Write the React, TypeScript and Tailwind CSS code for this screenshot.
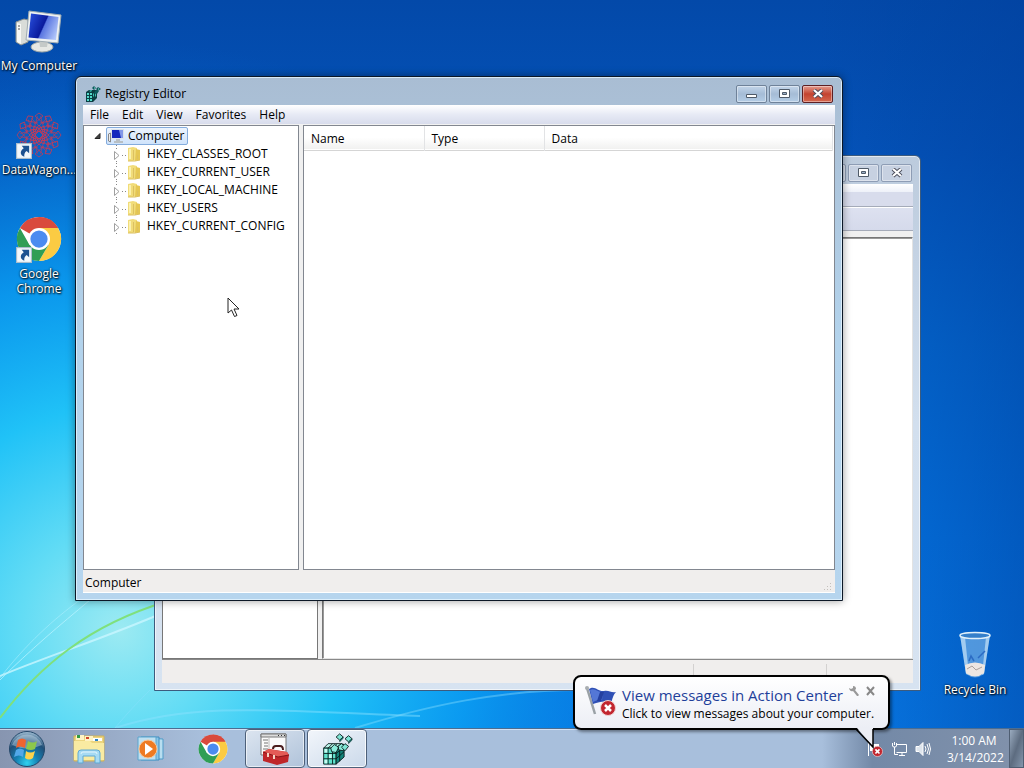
import { useState } from "react";
import type { ReactNode } from "react";

const keys = [
  "HKEY_CLASSES_ROOT",
  "HKEY_CURRENT_USER",
  "HKEY_LOCAL_MACHINE",
  "HKEY_USERS",
  "HKEY_CURRENT_CONFIG",
];

const Wallpaper = () => (
  <svg
    className="absolute inset-0 w-full h-full"
    viewBox="0 0 1024 768"
    preserveAspectRatio="none"
    aria-hidden="true"
  >
    <defs>
      <linearGradient id="sky" x1="0" y1="0" x2="0" y2="1">
        <stop offset="0" stopColor="#0349a9" />
        <stop offset="0.2" stopColor="#0453b9" />
        <stop offset="0.45" stopColor="#0468d0" />
        <stop offset="0.7" stopColor="#0474e2" />
        <stop offset="1" stopColor="#087be8" />
      </linearGradient>
      <radialGradient
        id="glow"
        gradientUnits="userSpaceOnUse"
        cx="120"
        cy="630"
        r="590"
      >
        <stop offset="0" stopColor="#9ceaf2" />
        <stop offset="0.17" stopColor="#62dcf5" />
        <stop offset="0.38" stopColor="#20c2f7" />
        <stop offset="0.6" stopColor="#0b9ff2" stopOpacity="0.85" />
        <stop offset="1" stopColor="#0468d0" stopOpacity="0" />
      </radialGradient>
      <linearGradient id="shade" x1="0" y1="0" x2="1" y2="0">
        <stop offset="0.8" stopColor="#003f9c" stopOpacity="0" />
        <stop offset="1" stopColor="#003f9c" stopOpacity="0.5" />
      </linearGradient>
    </defs>
    <rect width="1024" height="768" fill="url(#sky)" />
    <rect width="1024" height="768" fill="url(#glow)" />
    <rect width="1024" height="768" fill="url(#shade)" />
    <g fill="none">
      <path d="M0 676C50 655 100 640 165 612" stroke="#c9f6ff" strokeWidth="2" opacity="0.8" />
      <path d="M0 680C30 650 60 625 90 600" stroke="#b5f2ff" strokeWidth="1" opacity="0.8" />
      <path d="M0 678C25 645 55 618 80 600" stroke="#b5f2ff" strokeWidth="1" opacity="0.5" />
      <path d="M0 718C40 665 90 625 165 602" stroke="#7fe07c" strokeWidth="2" />
      <path d="M115 728C200 700 290 712 420 716" stroke="#8fe2ff" strokeWidth="2" opacity="0.45" />
      <path d="M115 728C130 710 140 700 150 690" stroke="#8fe2ff" strokeWidth="1" opacity="0.4" />
      <path d="M355 728C430 705 500 690 580 690" stroke="#8fe2ff" strokeWidth="2" opacity="0.4" />
    </g>
  </svg>
);

const Shortcut = () => (
  <svg viewBox="0 0 14 14" className="absolute left-0 bottom-0 w-4 h-4" aria-hidden="true">
    <rect x="0.5" y="0.5" width="13" height="13" fill="#f2f7fb" stroke="#a9bccb" />
    <path d="M5 2.5h6.5V9L9.3 6.9C7.6 8 7 9.700 7.300 12C3.300 10.500 3.200 7 6.800 4.500z" fill="#1c5190" />
  </svg>
);

const ChromeIcon = ({ className }: { className: string }) => (
  <svg viewBox="0 0 48 48" className={className} aria-hidden="true">
    <circle cx="24" cy="24" r="23" fill="#fff" />
    <path d="M24 24L4.080 12.500A23 23 0 0 1 43.920 12.500z" fill="#d94a3d" />
    <path d="M24 1A23 23 0 0 1 43.920 12.500H24z" fill="#d94a3d" />
    <path d="M43.920 12.500A23 23 0 0 1 24 47L34 30L24 12.500z" fill="#fbcb43" />
    <path d="M4.080 12.500A23 23 0 0 0 24 47L34 30H14z" fill="#2f9e55" />
    <circle cx="24" cy="24" r="11.500" fill="#fff" />
    <circle cx="24" cy="24" r="9" fill="#4b8bf0" />
  </svg>
);

const MonitorIcon = () => (
  <svg viewBox="0 0 48 44" className="w-12 h-11" aria-hidden="true">
    <defs>
      <linearGradient id="screen" x1="0" y1="0.300" x2="1" y2="0.700">
        <stop offset="0" stopColor="#2448d4" />
        <stop offset="0.48" stopColor="#0a1a9c" />
        <stop offset="0.52" stopColor="#5a76e0" />
        <stop offset="1" stopColor="#b4c8fb" />
      </linearGradient>
    </defs>
    <path d="M1 13l8-3 4 1v22l-7 3-5-3z" fill="#d9dcd8" stroke="#8b9291" />
    <path d="M2 14l4 1v20l-4-2z" fill="#f7f8f5" />
    <path d="M3 17h2M3 20h2" stroke="#555" />
    <ellipse cx="27" cy="38" rx="11" ry="5" fill="#e6e8e4" stroke="#a2a9a7" />
    <path d="M24 30l9 1-1 7h-7z" fill="#c5cac8" />
    <path d="M14 2L46 6L43 34L11 31z" fill="#eef1f2" stroke="#9facb3" />
    <path d="M16 4.500L43.500 8L41 31L13.500 28.500z" fill="url(#screen)" />
  </svg>
);

const StarIcon = () => (
  <svg viewBox="0 0 46 46" className="w-[46px] h-[46px]" fill="none" stroke="#c23a58" aria-hidden="true">
    {[0, 30, 60, 90, 120, 150, 180, 210, 240, 270, 300, 330].map((deg) => (
      <g key={deg} transform={`rotate(${deg} 23 23)`}>
        <path d="M19 4l4-3 4 3-9 8M28 12l-9-8" strokeWidth="0.8" />
        <path d="M15 6l8 8 8-8" strokeWidth="0.6" />
        <path d="M20 17l3-4 3 4-3 3z" strokeWidth="1" />
      </g>
    ))}
  </svg>
);

const RecycleIcon = () => (
  <svg viewBox="0 0 40 48" className="w-10 h-12" aria-hidden="true">
    <path d="M5 4L11 43Q20 50 29 43L35 4z" fill="#9cccf2" fillOpacity="0.5" />
    <path d="M5 4L11 43L14 44L10 6zM35 4L29 43L27 44L31 6z" fill="#d8eefb" fillOpacity="0.6" />
    <path d="M10 34Q20 29 30 34L29 42Q20 49 11 42z" fill="#ece6e2" />
    <path d="M12 38l5-3 4 4 6-3" fill="none" stroke="#aaa09c" />
    <path d="M14 30l2-5 3 5M23 27l7-7" stroke="#2c6cc4" strokeWidth="1.500" fill="none" />
    <ellipse cx="20" cy="4.500" rx="15" ry="3" fill="#347fca" stroke="#e0f0fa" strokeWidth="1.500" />
  </svg>
);

const RegeditIcon = ({ className }: { className: string }) => (
  <svg viewBox="0 0 36 36" className={className} stroke="#07191a" strokeWidth="1" aria-hidden="true">
    <path d="M3 17l5-5h15l-5 5z" fill="#b8f4e9" />
    <path d="M3 17h14v18H3z" fill="#5fe3cd" />
    <path d="M17 17l6-5 3 1v14l-9 8z" fill="#128379" />
    <path d="M3 23h14M3 29h14M8 17v18M13 17v18M17 23l9-7M17 29l9-8M21 14v18M8 17l5-5M13 17l5-5" fill="none" />
    <path d="M4 18h3v4H4zM9 24h3v4H9zM4 30h3v4H4zM14 18h2v4h-2z" fill="#c9f8f0" stroke="none" />
    <path d="M11 17l4-4 5 3-3 6-5-1zM19 15l4-3 4 3-2 5-5-1z" fill="#8cecdc" />
    <path d="M21 1l4 3.500-4 3.500-4-3.500zM31 3l4 3.500-4 3.500-4-3.500zM27 12l4 3-4 5-4-4z" fill="#7fe5d4" />
    <path d="M21 8v2l4-4V4.500zM31 10v2l4-4V6.500z" fill="#128379" strokeWidth="0.5" />
  </svg>
);

// Title bar size, with fewer and heavier cells so that it stays readable at 16px.
const RegeditSmall = () => (
  <svg viewBox="0 0 16 16" className="w-4 h-4" aria-hidden="true">
    <path d="M1 6l3-2h8v8l-4 4H1z" fill="#0b3f43" />
    <path d="M2 7h2v2H2zM5 7h2v2H5zM2 10h2v2H2zM5 10h2v2H5zM2 13h2v2H2zM5 13h2v2H5z" fill="#53dbcb" />
    <path d="M4 5l2-1h1L6 6zM8 8l1-1v3l-1 1zM10 8l1-1v3l-1 1z" fill="#3dbfb3" />
    <path d="M9 0l2 2-2 2-2-2zM13 1l3 2-3 2-2-2zM11 4l3 1-2 3-3-1z" fill="#0e5a5c" />
    <path d="M9 1l1 1-1 1zM13 2l1 1-1 1z" fill="#7fe5d4" />
  </svg>
);

const SmallComputer = () => (
  <svg viewBox="0 0 18 16" className="w-[18px] h-4" aria-hidden="true">
    <path d="M1.500 6l2-1v9l-2-1z" fill="#eee" stroke="#888" />
    <path d="M4 1h13v10H4z" fill="#dbe2ea" />
    <path d="M5 2h11v8H5z" fill="#1327bd" />
    <path d="M12 2h4v8h-2z" fill="#8298e8" />
    <path d="M9 11h4v2h3v2H7v-2h2z" fill="#b8bfc4" />
  </svg>
);

const Folder = () => (
  <svg viewBox="0 0 14 16" className="w-[14px] h-4" aria-hidden="true">
    <path d="M1 2l5-1v14H1zM6 1l4 1v12l-4 1z" fill="#f1dc79" />
    <path d="M9 3l4 1v10l-5 1z" fill="#e5c753" />
    <path d="M2 3h2v10H2z" fill="#fbf1b0" />
    <path d="M6.500 4v10M10.500 9v4M1 15h7l5-1" stroke="#dcc061" fill="none" />
  </svg>
);

const ErrorBadge = () => (
  <>
    <circle cx="8" cy="8" r="7.500" fill="#c2262f" stroke="#eed0d0" />
    <path d="M5 5l6 6M11 5l-6 6" stroke="#fff" strokeWidth="2.500" />
  </>
);

const FlagIcon = () => (
  <svg viewBox="0 0 34 32" className="w-[34px] h-8 shrink-0" aria-hidden="true">
    <path d="M3 3l8 26" stroke="#9aa1a6" strokeWidth="2.500" />
    <circle cx="3" cy="3" r="2" fill="#a8adb0" />
    <path d="M5 4C11 0 14 7 20 6C25 5 27 8 32 7C29 10 29 13 27 18C21 15 16 17 9 19z" fill="#2f50b5" />
    <path d="M6 5C11 2 14 8 19 7L18 15C14 14 12 16 9 17z" fill="#5477d6" />
    <path d="M16 7l4 0-3 9-4 0z" fill="#2440a0" />
    <g transform="translate(16 15)"><ErrorBadge /></g>
  </svg>
);

const StartOrb = () => (
  <svg viewBox="0 0 38 38" className="w-[38px] h-[38px]" aria-hidden="true">
    <defs>
      <radialGradient id="orb" cx="0.5" cy="0.9" r="0.9">
        <stop offset="0" stopColor="#30d2ef" />
        <stop offset="0.35" stopColor="#1581b3" />
        <stop offset="0.7" stopColor="#204f78" />
        <stop offset="1" stopColor="#a3c0d5" />
      </radialGradient>
    </defs>
    <circle cx="19" cy="19" r="17.500" fill="url(#orb)" stroke="#24486a" />
    <path d="M4 15A16 16 0 0 1 34 15Q19 22 4 15z" fill="#d7e8f2" opacity="0.4" />
    <path d="M10 10Q14 7 18 10L17 18Q12 15 8 18z" fill="#ee6430" />
    <path d="M20 11Q25 14 29 11L27 19Q23 21 18 19z" fill="#8cc84b" />
    <path d="M8 20Q12 17 16 20L15 27Q11 24 6 27z" fill="#52a8e9" />
    <path d="M18 21Q22 24 27 21L25 28Q21 31 17 28z" fill="#fdd34c" />
  </svg>
);

const ExplorerIcon = () => (
  <svg viewBox="0 0 34 32" className="w-[34px] h-8" aria-hidden="true">
    <path d="M2 3h30v25H2z" fill="#ecd57f" stroke="#cfb25a" />
    <path d="M4 2h8v5H4zM13 3h8v5h-8z" fill="#fff3c4" />
    <path d="M5 2h3v3H5z" fill="#2f9a41" />
    <path d="M14 4h3v2h-3z" fill="#d14629" />
    <path d="M21 5h9v3h-9z" fill="#fff" />
    <path d="M23 6h3v2h-3z" fill="#2b82c4" />
    <path d="M2 8h16l2 2h12v17H2z" fill="#f9eba2" />
    <path d="M6 30V20q0-3 3-3h16q3 0 3 3v10h-5v-7H11v7z" fill="#a7dbf3" stroke="#5fa9d3" />
    <path d="M9 21q0-2 2-2h12q2 0 2 2" fill="none" stroke="#e3f5fd" />
  </svg>
);

const PlayerIcon = () => (
  <svg viewBox="0 0 28 26" className="w-7 h-[26px]" aria-hidden="true">
    <path d="M7 2l19 1v20H7z" fill="#b8def0" stroke="#4e9cc9" />
    <path d="M4 1h18v23H4z" fill="#8ac6e7" stroke="#3e8dc0" />
    <path d="M1 1h18v23H1z" fill="#bfe0f1" stroke="#5aa4cd" />
    <circle cx="11" cy="13" r="9" fill="#ee7a22" stroke="#f6c79a" />
    <path d="M8 7l8 6-8 6z" fill="#fff" />
  </svg>
);

const ToolboxIcon = () => (
  <svg viewBox="0 0 32 34" className="w-8 h-[34px]" aria-hidden="true">
    <path d="M2 2h25v21H2z" fill="#fafafa" stroke="#777" />
    <path d="M2 2h25v3H2z" fill="#ddd" stroke="#777" />
    <path d="M19 3.500h1M22 3.500h1M25 3.500h1" stroke="#333" />
    <path d="M4 8h5M5 11h4M5 14h4M4 17h5" stroke="#777" />
    <path d="M10 5v17" stroke="#bbb" />
    <path d="M14 17q0-3 3-3h4q3 0 3 4" fill="none" stroke="#4a1c1c" strokeWidth="2" />
    <path d="M4 20l6-3 18 3 2 3-1 7-11 3-14-4z" fill="#bf2629" />
    <path d="M4 20l6-3 18 3 2 3-11 2z" fill="#e45b56" />
    <path d="M4 20l15 5 11-2" fill="none" stroke="#891518" />
    <path d="M9 21v4M15 23v4" stroke="#f5d4c4" strokeWidth="2" />
  </svg>
);

const WindowGlyph = ({ kind }: { kind: "min" | "max" | "close" }) => (
  <svg viewBox="0 0 12 10" className="w-3 h-[10px]" aria-hidden="true">
    {kind === "min" && <path d="M0.500 5.500h10v3h-10z" fill="#fff" stroke="#4f5a68" />}
    {kind === "max" && (
      <>
        <path d="M0.500 0.500h10v8h-10z" fill="#fff" stroke="#4f5a68" />
        <path d="M3.500 3.500h4v2h-4z" fill="#9bb0c8" stroke="#4f5a68" />
      </>
    )}
    {kind === "close" && (
      <>
        <path d="M2 1l8 7M10 1l-8 7" stroke="#4b4d5b" strokeWidth="4" />
        <path d="M2 1l8 7M10 1l-8 7" stroke="#fff" strokeWidth="2.200" />
      </>
    )}
  </svg>
);

const WindowButtons = ({ active }: { active: boolean }) => {
  const look = active
    ? "border-[#6f8299] bg-linear-to-b from-[#c3d5e9] via-[#a5bcd6] to-[#b4cde6]"
    : "border-[#8e9db5] bg-[#c7d1e1]";
  const closeLook = active
    ? "border-[#5d1f23] bg-linear-to-b from-[#e39a8d] via-[#c3422f] to-[#d5674e]"
    : look;
  const base =
    "w-[31px] h-[18px] rounded-xs border flex items-center justify-center shadow-[inset_0_0_0_1px_rgba(255,255,255,0.4)]";
  return (
    <div className="flex gap-[2px]">
      <button aria-label="Minimize" className={`${base} ${look}`}>
        <WindowGlyph kind="min" />
      </button>
      <button aria-label="Maximize" className={`${base} ${look}`}>
        <WindowGlyph kind="max" />
      </button>
      <button aria-label="Close" className={`${base} ${closeLook}`}>
        <WindowGlyph kind="close" />
      </button>
    </div>
  );
};

const DesktopIcon = ({
  label,
  place,
  shortcut,
  children,
}: {
  label: string;
  place: string;
  shortcut?: boolean;
  children: ReactNode;
}) => (
  <button className={`absolute w-20 flex flex-col items-center ${place}`}>
    <span className="relative h-12 flex items-center justify-center">
      {children}
      {shortcut && <Shortcut />}
    </span>
    <span className="mt-[3px] text-white leading-[15px] [text-shadow:1px_1px_2px_#000,0_0_2px_#000]">
      {label}
    </span>
  </button>
);

const BackWindow = () => (
  <section
    aria-label="Background window"
    className="absolute left-[154px] top-[155px] w-[767px] h-[536px] rounded-t-md border border-[#3c5b7e] bg-linear-to-b from-[#bccbdd] via-[#d2dfee] to-[#d7e3f1] shadow-[inset_0_0_0_1px_rgba(255,255,255,0.6)] p-[7px] pt-2 flex flex-col"
  >
    <div className="h-5 flex justify-end pr-[1px]">
      <WindowButtons active={false} />
    </div>
    <div className="bg-linear-to-b from-white to-[#eef1f9] h-[8px]" />
    <div className="h-[15px] bg-[#d8dcec] border-b border-[#a5abb9]" />
    <div className="h-6 bg-linear-to-b from-[#dde1f0] to-[#d5daeb] border-t border-t-white border-b border-b-[#a5abb9]" />
    <div className="flex-1 bg-[#f0f0f0] pt-[6px] flex gap-1">
      <div className="w-[156px] bg-white border border-[#777]" />
      <div className="flex-1 bg-white border border-[#777] border-r-[#e3e3e3] border-b-[#e3e3e3] shadow-[inset_1px_1px_0_#999]" />
    </div>
    <div className="h-6 bg-[#f0eeed] border-t border-[#888] flex justify-end">
      <div className="w-[133px] my-1 border-l border-[#d3d1d0]" />
      <div className="w-[87px] my-1 border-l border-[#d3d1d0]" />
    </div>
  </section>
);

const RegistryEditor = () => {
  const [selected, setSelected] = useState("Computer");

  return (
    <section
      aria-label="Registry Editor"
      className="absolute left-[75px] top-[76px] w-[768px] h-[525px] rounded-t-md border border-[#0b1726] bg-linear-to-b from-[#a9bdd3] via-[#b3d3ec] to-[#b6d5ee] shadow-[inset_0_0_0_1px_rgba(230,245,255,0.8),0_0_8px_rgba(0,0,0,0.4)] p-[7px] pt-2 flex flex-col"
    >
      <header className="h-5 flex items-start justify-between px-[2px]">
        <div className="flex items-center gap-1">
          <RegeditSmall />
          <h1 className="leading-[17px]">Registry Editor</h1>
        </div>
        <WindowButtons active />
      </header>
      <nav className="h-5 bg-linear-to-b from-white via-[#e7eaf5] to-[#d8dcec] border-b border-[#f2f2f2] flex items-center px-[7px] gap-[13px]">
        {["File", "Edit", "View", "Favorites", "Help"].map((item) => (
          <button key={item}>{item}</button>
        ))}
      </nav>
      <div className="flex-1 bg-[#f0f0f0] flex gap-1 min-h-0">
        <ul className="w-[216px] bg-white border border-[#828790] pt-[1px]">
          <li>
            <div className="flex items-center h-[18px] pl-[9px]">
              <svg viewBox="0 0 8 8" className="w-2 h-2 mr-[5px]" aria-hidden="true">
                <path d="M7 1.500v5H2z" fill="#444" stroke="#222" />
              </svg>
              <button
                onClick={() => setSelected("Computer")}
                className={`h-[18px] flex items-center gap-[3px] pr-[2px] rounded-xs border ${
                  selected === "Computer"
                    ? "border-[#84acdd] bg-linear-to-b from-[#edf4fd] to-[#cfe3fb]"
                    : "border-transparent"
                }`}
              >
                <SmallComputer />
                Computer
              </button>
            </div>
            <ul className="ml-[32px]">
              {keys.map((key) => (
                <li key={key} className="h-[18px] flex items-center gap-[1px]">
                  <svg viewBox="0 0 10 18" className="w-[10px] h-[18px] overflow-visible" aria-hidden="true">
                    <path d="M0.500 0v4M0.500 16v2M6 10.500h4" stroke="#888" strokeDasharray="1 2" />
                    <path d="M-1.500 6.500l4.500 4-4.500 4z" fill="#fff" stroke="#a0a0a0" />
                  </svg>
                  <button
                    onClick={() => setSelected(key)}
                    className={`flex items-center gap-[6px] leading-4 ${
                      selected === key ? "bg-[#cfe3fb]" : ""
                    }`}
                  >
                    <Folder />
                    {key}
                  </button>
                </li>
              ))}
            </ul>
          </li>
        </ul>
        <div className="flex-1 bg-white border border-[#828790] pr-[1px]">
          <table className="w-full table-fixed text-left">
            <thead>
              <tr className="h-6 bg-linear-to-b from-white via-white to-[#f1f1f0] border-b border-[#d5d5d5]">
                <th className="w-[120px] pl-[7px] pt-[2px] font-normal border-r border-[#e2e3e5]">Name</th>
                <th className="w-[120px] pl-[7px] pt-[2px] font-normal border-r border-[#e2e3e5]">Type</th>
                <th className="pl-[7px] pt-[2px] font-normal border-r border-[#e2e3e5]">Data</th>
              </tr>
            </thead>
          </table>
        </div>
      </div>
      <footer className="h-[23px] bg-[#f0eeed] border-b border-white px-[2px] pt-1 flex items-center justify-between">
        <span>{selected}</span>
        <svg viewBox="0 0 10 10" className="w-[10px] h-[10px] self-end" fill="#c4c0bc" aria-hidden="true">
          <path d="M7 1h1v1H7zM4 4h1v1H4zM7 4h1v1H7zM1 7h1v1H1zM4 7h1v1H4zM7 7h1v1H7z" />
        </svg>
      </footer>
    </section>
  );
};

const Notification = ({ onClose }: { onClose: () => void }) => (
  <aside className="absolute right-[134px] bottom-[38px] w-[317px] h-[55px] rounded-lg border-2 border-black bg-linear-to-b from-white to-[#eceef5] shadow-[2px_2px_3px_rgba(0,0,0,0.4)] pl-[9px] pr-2 pt-2 flex gap-1">
    <FlagIcon />
    <button className="text-left whitespace-nowrap w-[222px] self-start">
      <span className="block text-[15px] leading-5 text-[#1f3f9a]">View messages in Action Center</span>
      <span className="block leading-[18px]">Click to view messages about your computer.</span>
    </button>
    <button aria-label="Options" className="w-3 h-3">
      <svg viewBox="0 0 12 12" className="w-3 h-3" aria-hidden="true">
        <path d="M1 3l2 1 2-1V1q3 0 3 3l-1 1 4 5-1 1-1 0-4-5Q2 7 1 3z" fill="#999" />
      </svg>
    </button>
    <button aria-label="Close notification" onClick={onClose} className="w-3 h-3">
      <svg viewBox="0 0 12 12" className="w-3 h-3" aria-hidden="true">
        <path d="M3 2l7 8M10 2l-7 8" stroke="#888" strokeWidth="2" />
      </svg>
    </button>
    <svg viewBox="0 0 22 22" className="absolute right-[12px] top-[51px] w-[22px] h-[22px]" aria-hidden="true">
      <path d="M3 0L19 19V0z" fill="#eceef5" />
      <path d="M2 1L19 19V1" fill="none" stroke="#000" strokeWidth="1.500" />
    </svg>
  </aside>
);

const Taskbar = () => (
  <footer className="absolute inset-x-0 bottom-0 h-10 border-t border-[#4c6d91] bg-linear-to-r from-[#8795b0] via-[#a8bfdc] to-[#a8bfdc] via-20% shadow-[inset_0_1px_0_rgba(230,240,255,0.7)] flex items-center">
    <button aria-label="Start" className="w-[58px] flex justify-center pr-1">
      <StartOrb />
    </button>
    <button aria-label="Windows Explorer" className="w-[62px] flex justify-center">
      <ExplorerIcon />
    </button>
    <button aria-label="Windows Media Player" className="w-[62px] flex justify-center">
      <PlayerIcon />
    </button>
    <button aria-label="Google Chrome" className="w-[62px] flex justify-center">
      <ChromeIcon className="w-[30px] h-[30px]" />
    </button>
    <button
      aria-label="Administrative tools"
      className="w-[60px] h-[39px] mx-[1px] rounded-sm border border-[#4d6079] bg-linear-to-br from-[#dce5f0] to-[#b0c3da] shadow-[inset_0_0_0_1px_rgba(255,255,255,0.6)] flex justify-center items-center"
    >
      <ToolboxIcon />
    </button>
    <button
      aria-label="Registry Editor"
      className="w-[60px] h-[39px] ml-[1px] rounded-sm border border-[#4d6079] bg-linear-to-br from-[#f2f6fb] to-[#cbd9ea] shadow-[inset_0_0_0_1px_rgba(255,255,255,0.8)] flex justify-center items-center"
    >
      <RegeditIcon className="w-8 h-8" />
    </button>
    <div className="ml-auto h-full w-[202px] bg-linear-to-r from-[#a8bfdc] via-[#7389a7] to-[#8292ab] via-25% flex items-center justify-end text-white">
      <button aria-label="Action Center" className="mr-2">
        <svg viewBox="0 0 16 16" className="w-4 h-4" aria-hidden="true">
          <path d="M1.500 2v13" stroke="#fff" />
          <path d="M3 3h9v7H3z" fill="#fff" />
          <g transform="translate(5 5) scale(0.680)"><ErrorBadge /></g>
        </svg>
      </button>
      <button aria-label="Network" className="mr-2">
        <svg viewBox="0 0 16 16" className="w-4 h-4" fill="none" stroke="#fff" aria-hidden="true">
          <path d="M6 3.500h9.500v8H5.500M8 14.500h6M11 12v2M1.500 2v3q0 1 2 1t2-1V2M3.500 1v3M3.500 6v7.500H7" />
        </svg>
      </button>
      <button aria-label="Volume" className="mr-4">
        <svg viewBox="0 0 16 16" className="w-4 h-4" fill="none" stroke="#fff" aria-hidden="true">
          <path d="M1 5.500h3l4-4v13l-4-4H1z" fill="#dde4ec" />
          <path d="M10 5q2 3 0 6M12 3q3 5 0 10M14 2q3 6 0 12" />
        </svg>
      </button>
      <time className="text-center leading-[17px] whitespace-nowrap w-[54px] mr-2">
        1:00 AM
        <br />
        3/14/2022
      </time>
      <button
        aria-label="Show desktop"
        className="w-[15px] h-full border border-[#4f5e72] bg-linear-to-br from-[#9aabbf] via-[#5d6c80] to-[#8496ac]"
      />
    </div>
  </footer>
);

export default function App() {
  const [showMessage, setShowMessage] = useState(true);

  return (
    <main className="relative w-full h-screen min-h-[700px] overflow-hidden bg-[#0468d0] font-['Open_Sans','Noto_Sans',sans-serif] text-xs text-black cursor-default">
      <Wallpaper />
      <DesktopIcon label="My Computer" place="left-[-1px] top-[7px]">
        <MonitorIcon />
      </DesktopIcon>
      <DesktopIcon label="DataWagon..." place="left-[-1px] top-[111px]" shortcut>
        <StarIcon />
      </DesktopIcon>
      <DesktopIcon label="Google Chrome" place="left-[-1px] top-[215px]" shortcut>
        <ChromeIcon className="w-[46px] h-[46px]" />
      </DesktopIcon>
      <DesktopIcon label="Recycle Bin" place="right-[9px] bottom-[71px]">
        <RecycleIcon />
      </DesktopIcon>
      <BackWindow />
      <RegistryEditor />
      <Taskbar />
      {showMessage && <Notification onClose={() => setShowMessage(false)} />}
      <svg viewBox="0 0 13 21" className="absolute left-[227px] top-[297px] w-[13px] h-[21px] pointer-events-none" aria-hidden="true">
        <path d="M1 1v15l3.500-3 3 6.500 2.500-1-3-6.500h5z" fill="#fff" stroke="#222" />
      </svg>
    </main>
  );
}
